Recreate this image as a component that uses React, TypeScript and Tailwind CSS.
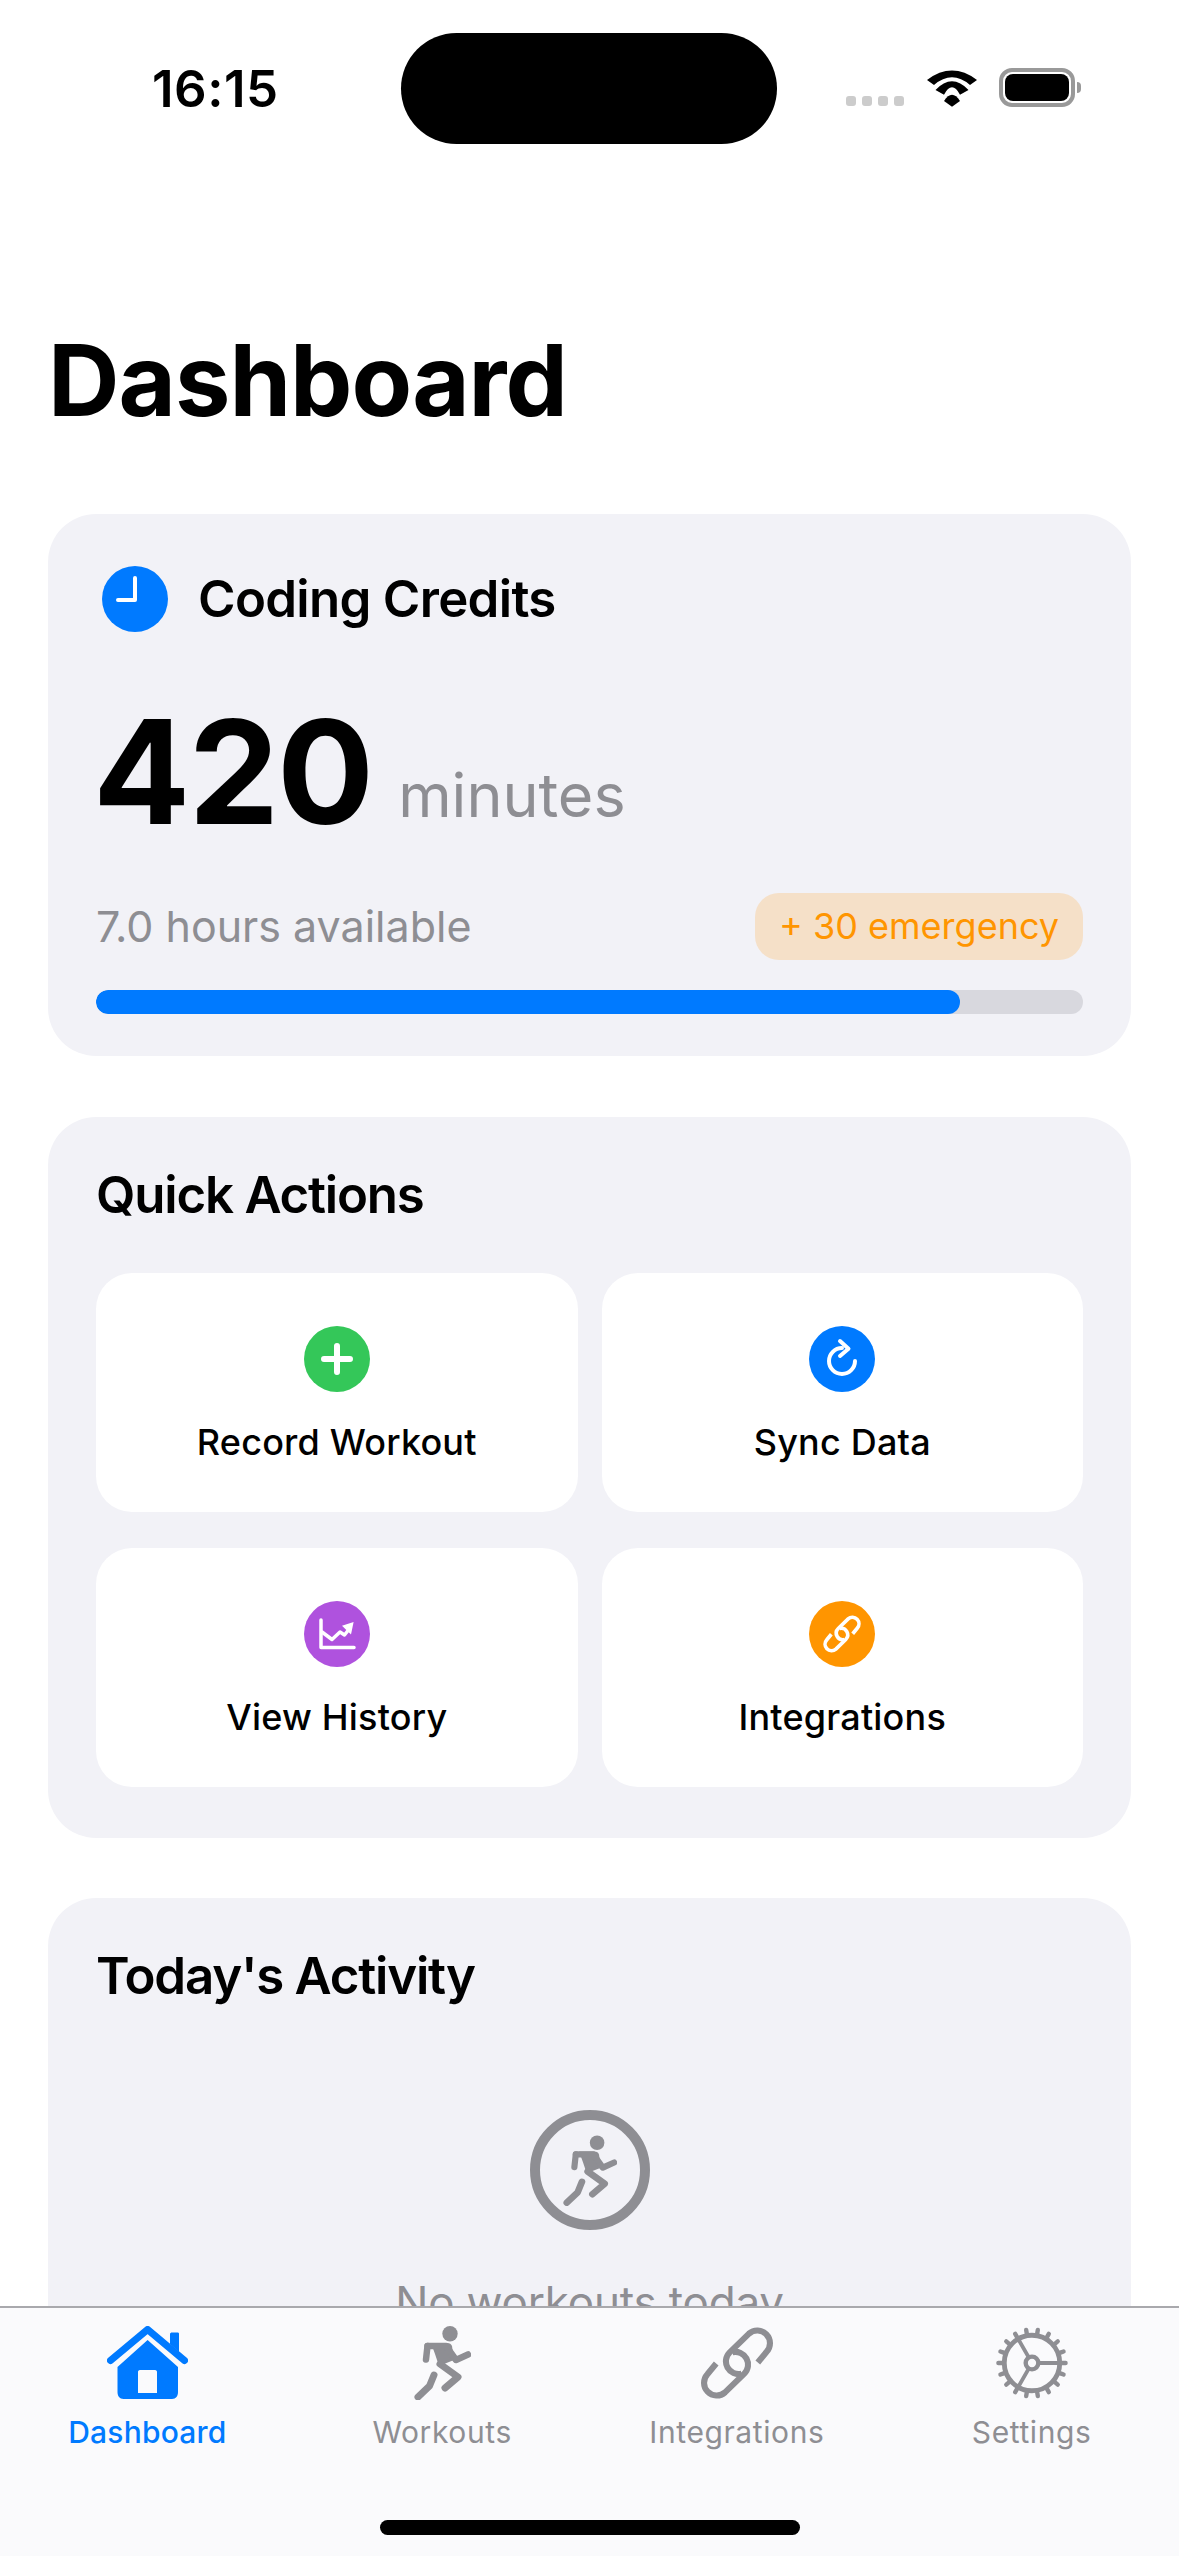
const actions = [
  { label: 'Record Workout', color: 'bg-[#34C759]', icon: <PlusGlyph /> },
  { label: 'Sync Data', color: 'bg-[#007AFF]', icon: <SyncGlyph /> },
  { label: 'View History', color: 'bg-[#AF52DE]', icon: <ChartGlyph /> },
  { label: 'Integrations', color: 'bg-[#FF9500]', icon: <LinkGlyph className="w-[38px] h-[38px] text-white" stroke={7} /> },
]

export default function App() {
  const minutes = 420
  const progressPct = (minutes / 480) * 100

  return (
    <div className="w-[1179px] h-[2556px] flex flex-col overflow-hidden bg-white font-['Inter',sans-serif] text-black">
      <div className="flex-1 min-h-0 overflow-hidden">
        <StatusBar />

        <h1 className="mt-[173px] ml-[48px] text-[99px] leading-[102px] font-bold tracking-[-1px]">Dashboard</h1>

        {/* Coding credits */}
        <section className="mt-[83px] mx-[48px] h-[542px] rounded-[48px] bg-[#F2F2F7] px-[48px] pt-[52px]">
          <div className="flex items-center h-[66px]">
            <div className="w-[78px] flex justify-center">
              <ClockGlyph />
            </div>
            <h2 className="ml-[24px] text-[51px] leading-[66px] font-semibold tracking-[-0.7px]">Coding Credits</h2>
          </div>

          <div className="mt-[68px] -ml-[3px] flex items-end h-[144px]">
            <span className="text-[144px] leading-[144px] font-bold tracking-[-2px]">{minutes}</span>
            <span className="ml-[26px] mb-[19px] text-[61px] leading-[60px] text-[#8E8E93]">minutes</span>
          </div>

          <div className="mt-[49px] flex items-center justify-between">
            <span className="text-[43px] leading-[67px] text-[#8E8E93]">7.0 hours available</span>
            <span className="h-[67px] px-[24px] rounded-[24px] bg-[#F5E0C8] text-[36px] leading-[67px] text-[#FF9500]">
              + 30 emergency
            </span>
          </div>

          <div className="mt-[30px] h-[24px] rounded-[12px] bg-[#D8D8DE] overflow-hidden">
            <div className="h-full rounded-[12px] bg-[#007AFF]" style={{ width: `${progressPct}%` }} />
          </div>
        </section>

        {/* Quick actions */}
        <section className="mt-[61px] mx-[48px] h-[721px] rounded-[48px] bg-[#F2F2F7] px-[48px] pt-[48px]">
          <h2 className="text-[51px] leading-[60px] font-semibold tracking-[-1.2px]">Quick Actions</h2>
          <div className="mt-[48px] grid grid-cols-2 gap-x-[24px] gap-y-[36px]">
            {actions.map((a) => (
              <div key={a.label} className="h-[239px] rounded-[36px] bg-white flex flex-col items-center pt-[53px]">
                <div className={`w-[66px] h-[66px] rounded-full flex items-center justify-center ${a.color}`}>{a.icon}</div>
                <span className="mt-[28px] text-[36px] leading-[44px] font-medium tracking-[0.2px]">{a.label}</span>
              </div>
            ))}
          </div>
        </section>

        {/* Today's activity, runs under the tab bar */}
        <section className="mt-[60px] mx-[48px] h-[600px] rounded-[48px] bg-[#F2F2F7] px-[48px] pt-[48px]">
          <h2 className="text-[51px] leading-[60px] font-semibold tracking-[-1.2px]">Today's Activity</h2>
          <div className="mt-[104px] flex flex-col items-center">
            <div className="w-[120px] h-[120px] rounded-full border-[10px] border-[#8E8E93] flex items-center justify-center">
              <RunnerGlyph className="w-[54px] h-[71px] text-[#8E8E93]" />
            </div>
            <p className="mt-[42px] text-[44px] leading-[60px] tracking-[-0.2px] text-[#8E8E93]">No workouts today</p>
          </div>
        </section>
      </div>

      <TabBar />
    </div>
  )
}

function StatusBar() {
  return (
    <div className="h-[156px] pt-[33px] pl-[152px] flex items-start">
      <span className="w-[249px] mt-[28px] text-[51px] leading-[56px] font-semibold tracking-[0.5px]">16:15</span>
      <div className="w-[376px] h-[111px] rounded-full bg-black" />
      <div className="ml-[69px] mt-[35px] flex items-end">
        <div className="flex gap-[6px] pb-[1px]">
          <div className="w-[10px] h-[10px] rounded-[3px] bg-[#CCCCCC]" />
          <div className="w-[10px] h-[10px] rounded-[3px] bg-[#CCCCCC]" />
          <div className="w-[10px] h-[10px] rounded-[3px] bg-[#CCCCCC]" />
          <div className="w-[10px] h-[10px] rounded-[3px] bg-[#CCCCCC]" />
        </div>
        <svg viewBox="0 0 50 37" className="ml-[23px] w-[50px] h-[37px]">
          <path d="M0 10 Q25 -8.8 50 10 L43 15 Q25 -0.4 7 15 Z" fill="black" />
          <path d="M8.5 20 Q25 2.6 41.5 20 L33 24.7 Q25 10 17 24.7 Z" fill="black" />
          <path d="M17 31 Q25 18.4 33 31 L25 36.7 Z" fill="black" />
        </svg>
        <div className="ml-[22px] w-[76px] h-[39px] rounded-[13px] border-[4px] border-[#999999] p-[2px]">
          <div className="w-full h-full rounded-[8px] bg-black" />
        </div>
        <div className="ml-[2px] mb-[14px] w-[4px] h-[11px] rounded-r-full bg-[#999999]" />
      </div>
    </div>
  )
}

function TabBar() {
  return (
    <nav className="h-[250px] shrink-0 border-t-[2px] border-[#A9A9AD] bg-[#FAFAFC] flex flex-col items-center">
      <div className="w-full grid grid-cols-4 pt-[18px]">
        <Tab label="Dashboard" active icon={<HomeGlyph />} />
        <Tab label="Workouts" icon={<RunnerGlyph className="w-[57px] h-[74px] text-[#8E8E93]" />} />
        <Tab label="Integrations" icon={<LinkGlyph className="w-[74px] h-[74px] text-[#8E8E93]" stroke={6} />} />
        <Tab label="Settings" icon={<GearGlyph />} />
      </div>
      <div className="mt-[70px] w-[420px] h-[15px] rounded-full bg-black" />
    </nav>
  )
}

function Tab({ label, icon, active }: { label: string; icon: React.ReactNode; active?: boolean }) {
  return (
    <div className="flex flex-col items-center">
      <div className="h-[74px] flex items-center justify-center">{icon}</div>
      <span
        className={`mt-[14px] text-[30px] leading-[36px] ${active ? 'font-medium tracking-[0.2px] text-[#007AFF]' : 'tracking-[0.6px] text-[#8E8E93]'}`}
      >
        {label}
      </span>
    </div>
  )
}

function ClockGlyph() {
  return (
    <svg viewBox="0 0 66 66" className="w-[66px] h-[66px]">
      <circle cx="33" cy="33" r="33" fill="#007AFF" />
      <path d="M33 12 V34 H16" fill="none" stroke="white" strokeWidth="4" strokeLinecap="round" strokeLinejoin="round" />
    </svg>
  )
}

function PlusGlyph() {
  return (
    <svg viewBox="0 0 32 32" className="w-[32px] h-[32px]">
      <path d="M16 3 V29 M3 16 H29" stroke="white" strokeWidth="6" strokeLinecap="round" />
    </svg>
  )
}

function SyncGlyph() {
  return (
    <svg viewBox="0 0 66 66" className="w-[66px] h-[66px]">
      <g fill="none" stroke="white" strokeWidth="4" strokeLinecap="round" strokeLinejoin="round">
        <path d="M46 35 A13 13 0 1 1 33 22" />
        <path d="M31 15 L39.5 22.7 L31 30" />
      </g>
    </svg>
  )
}

function ChartGlyph() {
  return (
    <svg viewBox="0 0 66 66" className="w-[66px] h-[66px]">
      <g fill="none" stroke="white" strokeWidth="3.5" strokeLinecap="round" strokeLinejoin="round">
        <path d="M17 19 V46.5 H50" />
        <path d="M18 31 L28 38.5 L36 31 L40.5 34 L46 27" />
      </g>
      <path d="M38 24.7 L49.6 21 L47 33.6 Z" fill="white" />
    </svg>
  )
}

function LinkGlyph({ className, stroke }: { className: string; stroke: number }) {
  const d = 'M57 36 L65.7 25.45 A12.5 12.5 0 0 0 48.3 7.55 L29.3 26.05 A12.5 12.5 0 0 0 41 47.1'
  return (
    <svg viewBox="0 0 73 73" className={className}>
      <g fill="none" stroke="currentColor" strokeWidth={stroke}>
        <path d={d} />
        <path d={d} transform="rotate(180 36.5 36.5)" />
      </g>
    </svg>
  )
}

function RunnerGlyph({ className }: { className: string }) {
  return (
    <svg viewBox="0 0 57 74" className={className}>
      <circle cx="36" cy="7.7" r="7.7" fill="currentColor" />
      <path d="M17 17 H33 C36 17 37 18 38 20 L40 34 L25 40 L21 28 Z" fill="currentColor" />
      <g fill="none" stroke="currentColor" strokeLinecap="round" strokeLinejoin="round">
        <path d="M13.5 20 L12 33.5" strokeWidth="6.5" />
        <path d="M13.5 20 H32 L42 34 L54 28.5" strokeWidth="6.5" />
        <path d="M26 38 L44 51 L31 62" strokeWidth="7" />
        <path d="M20 49 L15.5 60 L4 71" strokeWidth="7" />
      </g>
    </svg>
  )
}

function HomeGlyph() {
  return (
    <svg viewBox="0 0 81 74" className="w-[81px] h-[74px]">
      <path d="M63 18 V8 C63 7 64 6.5 65 6.5 H70.5 C71.5 6.5 72 7 72 8 V26 Z" fill="#007AFF" />
      <path
        d="M40.6 14 L71 41 V66 C71 70 69 73 65 73 H16.5 C12.5 73 10.5 70 10.5 66 V41 Z M33 44 C31.5 44 31 45 31 46 V67 H50 V46 C50 45 49.5 44 48 44 Z"
        fill="#007AFF"
        fillRule="evenodd"
      />
      <path d="M3.5 34.5 L40.6 3.5 L77.5 34.5" fill="none" stroke="#007AFF" strokeWidth="7" strokeLinecap="round" strokeLinejoin="round" />
    </svg>
  )
}

function GearGlyph() {
  const teeth = Array.from({ length: 18 }, (_, i) => i * 20 + 10)
  return (
    <svg viewBox="0 0 76 76" className="w-[76px] h-[74px]">
      <g fill="none" stroke="#8E8E93" strokeLinecap="round">
        <circle cx="38" cy="38" r="28.5" strokeWidth="5" />
        {teeth.map((deg) => (
          <path key={deg} d="M38 7 V3.5" strokeWidth="4.5" transform={`rotate(${deg} 38 38)`} />
        ))}
        <circle cx="38" cy="38" r="6.5" strokeWidth="4.5" />
        <path d="M45 38 H65" strokeWidth="4" />
        <path d="M34.5 32 L24.5 14.5" strokeWidth="4" />
        <path d="M34.5 44 L24.5 61.5" strokeWidth="4" />
      </g>
    </svg>
  )
}
